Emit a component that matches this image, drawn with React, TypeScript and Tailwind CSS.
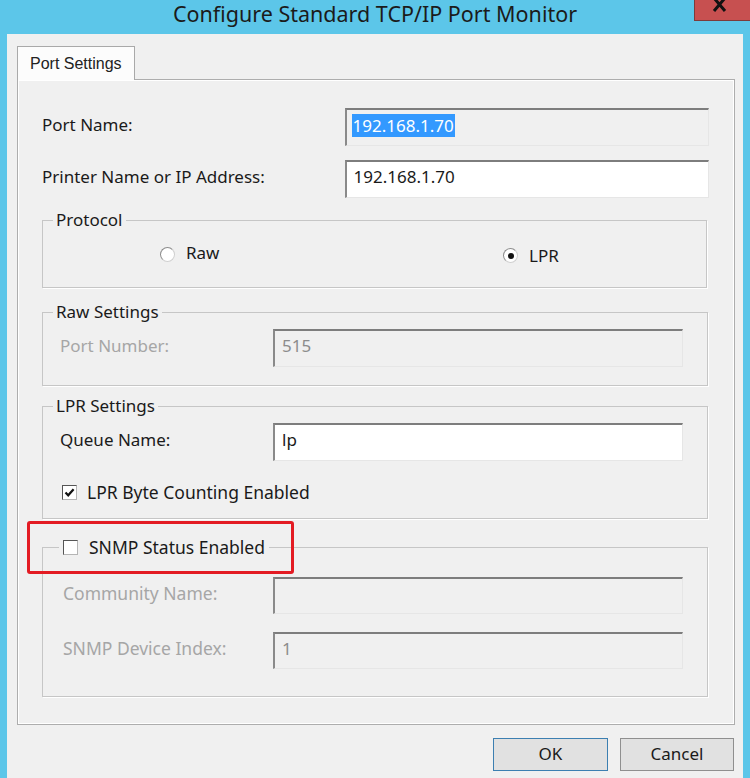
import React from "react";

const font = { fontFamily: '"Noto Sans", "Open Sans", Arial, sans-serif' };

function TextBox({ children, white, className = "" }: { children?: React.ReactNode; white?: boolean; className?: string }) {
  return (
    <div
      className={`flex items-center pl-[5px] pb-[5px] border-t-2 border-l-2 border-r border-b border-t-[#7d7d7d] border-l-[#8a8a8a] border-r-[#e6e6e6] border-b-[#e6e6e6] text-[17px] text-[#1a1a1a] ${white ? "bg-white" : "bg-[#f0f0f0]"} ${className}`}
    >
      {children}
    </div>
  );
}

function Radio({ checked }: { checked?: boolean }) {
  return (
    <div className="w-[15px] h-[15px] rounded-full border border-t-[#8c8c8c] border-l-[#8c8c8c] border-r-[#d0d0d0] border-b-[#d0d0d0] bg-white flex items-center justify-center">
      {checked && <div className="w-[6px] h-[6px] rounded-full bg-[#111]" />}
    </div>
  );
}

function Check({ checked }: { checked?: boolean }) {
  return (
    <div className="w-[15px] h-[15px] border border-t-[#555] border-l-[#555] border-r-[#b5b5b5] border-b-[#b5b5b5] bg-white flex items-center justify-center">
      {checked && (
        <svg width="11" height="11" viewBox="0 0 11 11">
          <path d="M1.5 5.5 L4.2 8.3 L9.6 2.2" fill="none" stroke="#111" strokeWidth="2.2" />
        </svg>
      )}
    </div>
  );
}

export default function App() {
  return (
    <div className="w-[750px] h-[778px] bg-[#5cc6e9] flex flex-col overflow-hidden relative" style={font}>
      {/* title bar */}
      <div className="h-[34px] flex items-center justify-center relative">
        <span className="text-[21.5px] text-[#1b1b1b] leading-none mt-[-6px]">Configure Standard TCP/IP Port Monitor</span>
        <div className="absolute right-0 top-0 w-[56px] h-[21px] bg-[#c75050] border-l border-b border-[#7d3b3b] flex justify-center">
          <svg width="16" height="12" viewBox="0 0 16 12" className="ml-[-6px]">
            <path d="M2 -2 L13 11 M13 -2 L2 11" stroke="#111" strokeWidth="3" />
          </svg>
        </div>
      </div>

      {/* body */}
      <div className="flex-1 mx-[7px] bg-[#f0f0f0] pt-[12px] pl-[10px] flex flex-col">
        {/* tab */}
        <div className="flex">
          <div
            className="relative z-10 w-[118px] h-[34px] bg-[#fcfcfc] border border-b-0 border-[#a9a9a9] flex items-start pl-[12px] pt-[5px] text-[16px] text-[#222]"
            style={{ fontFamily: '"Liberation Sans", Arial, sans-serif' }}
          >
            Port Settings
          </div>
        </div>

        {/* panel */}
        <div className="relative mt-[-1px] w-[718px] h-[646px] border border-[#adadad] shadow-[inset_1px_1px_0_#ffffff,inset_-1px_-1px_0_#ffffff] pl-[24px] pr-[27px] pt-[28px] text-[17px] text-[#1a1a1a]">
          {/* Port name */}
          <div className="flex items-center h-[38px]">
            <div className="w-[303px] mb-[5px]">Port Name:</div>
            <TextBox className="w-[365px] h-[38px] mr-[-2px]">
              <span className="bg-[#3399ff] text-white leading-[23px] px-[1px]">192.168.1.70</span>
            </TextBox>
          </div>
          <div className="flex items-center h-[38px] mt-[14px]">
            <div className="w-[303px] mb-[5px]">Printer Name or IP Address:</div>
            <TextBox white className="w-[365px] h-[38px] mr-[-2px] pl-[7px]">192.168.1.70</TextBox>
          </div>

          {/* Protocol */}
          <fieldset className="mt-[12px] border border-[#c6c6c6] shadow-[1px_1px_0_#ffffff] pb-[23px]">
            <legend className="ml-[10px] px-[3px] leading-[20px]">Protocol</legend>
            <div className="flex items-center h-[20px] mt-[14px]">
              <div className="w-[460px] pl-[117px] flex items-center gap-[11px]">
                <Radio />
                <span className="mt-[-2px]">Raw</span>
              </div>
              <div className="flex items-center gap-[11px] mt-[3px]">
                <Radio checked />
                <span>LPR</span>
              </div>
            </div>
          </fieldset>

          {/* Raw settings */}
          <fieldset className="mt-[14px] border border-[#c6c6c6] shadow-[1px_1px_0_#ffffff] pb-[18px] pl-[17px] pr-[24px]">
            <legend className="ml-[-7px] px-[3px] leading-[20px]">Raw Settings</legend>
            <div className="flex items-center mt-[7px]">
              <div className="w-[213px] mb-[5px] text-[#a6a6a6]">Port Number:</div>
              <TextBox className="w-[410px] h-[38px] pl-[7px] text-[#8c8c8c]">515</TextBox>
            </div>
          </fieldset>

          {/* LPR settings */}
          <fieldset className="mt-[10px] border border-[#c6c6c6] shadow-[1px_1px_0_#ffffff] pb-[16px] pl-[17px] pr-[24px]">
            <legend className="ml-[-7px] px-[3px] leading-[20px]">LPR Settings</legend>
            <div className="flex items-center mt-[7px]">
              <div className="w-[213px] mb-[5px]">Queue Name:</div>
              <TextBox white className="w-[410px] h-[38px] pl-[7px]">lp</TextBox>
            </div>
            <div className="flex items-center h-[20px] mt-[21px] pl-[2px] gap-[10px]">
              <Check checked />
              <span className="text-[17.5px]">LPR Byte Counting Enabled</span>
            </div>
          </fieldset>

          {/* SNMP */}
          <fieldset className="mt-[18px] border border-[#c6c6c6] shadow-[1px_1px_0_#ffffff] pb-[27px] pl-[20px] pr-[24px]">
            <legend className="ml-[-4px] px-[4px] h-[20px] leading-[20px] flex items-center gap-[11px]">
              <Check />
              <span className="text-[17.5px] leading-[20px]">SNMP Status Enabled</span>
            </legend>
            <div className="flex items-center mt-[20px]">
              <div className="w-[210px] mb-[5px] text-[#a6a6a6] text-[17.5px]">Community Name:</div>
              <TextBox className="w-[410px] h-[37px]" />
            </div>
            <div className="flex items-center mt-[18px]">
              <div className="w-[210px] mb-[5px] text-[#a6a6a6] text-[17.5px]">SNMP Device Index:</div>
              <TextBox className="w-[410px] h-[37px] pl-[7px] text-[#8c8c8c]">1</TextBox>
            </div>
          </fieldset>

          {/* red highlight */}
          <div className="absolute left-[9px] top-[441px] w-[267px] h-[53px] border-[3px] border-[#e31b23] rounded-[3px]" />
        </div>

        {/* buttons */}
        <div className="flex justify-end gap-[12px] pr-[9px] mt-[13px]">
          <div className="w-[115px] h-[33px] pb-[2px] bg-[#e1e1e1] border border-[#3c7fb1] flex items-center justify-center text-[17px] text-[#1a1a1a]">OK</div>
          <div className="w-[114px] h-[33px] pb-[2px] bg-[#e1e1e1] border border-[#8f8f8f] flex items-center justify-center text-[17px] text-[#1a1a1a]">Cancel</div>
        </div>
      </div>
    </div>
  );
}
